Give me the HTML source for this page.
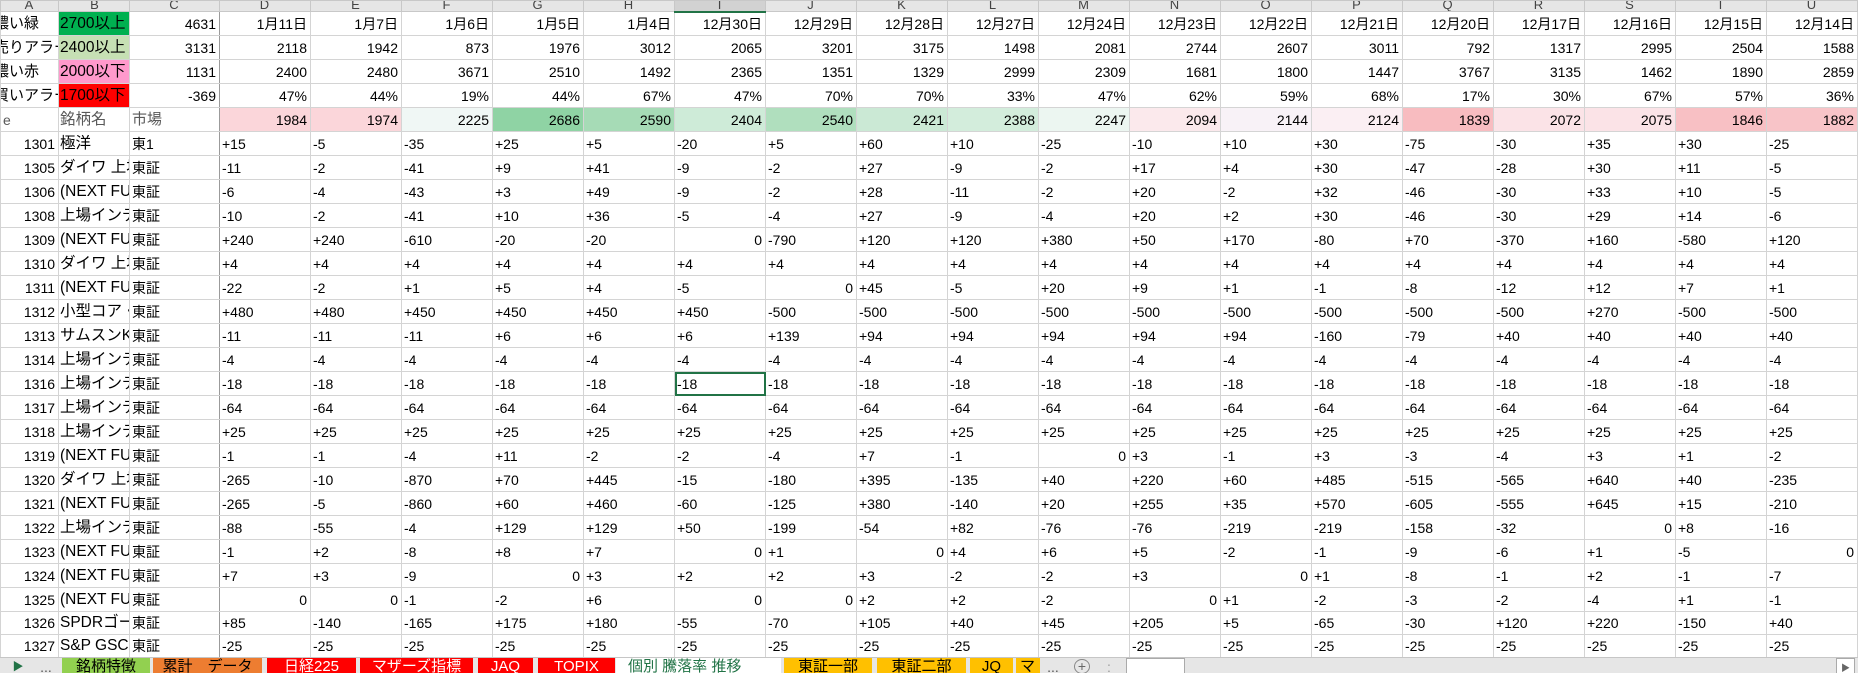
<!DOCTYPE html>
<html><head><meta charset="utf-8"><style>
*{margin:0;padding:0;box-sizing:border-box}
body{width:1858px;height:673px;overflow:hidden;background:#fff;font-family:"Liberation Sans","Noto Sans CJK JP",sans-serif;font-size:14px;color:#000;position:relative}
table{border-collapse:collapse;table-layout:fixed;position:absolute;left:0;top:0;width:1857px}
td{border:1px solid #d4d4d4;height:24px;padding:0 3px 0 2px;white-space:nowrap;overflow:hidden;vertical-align:middle;line-height:22px;max-width:0}
tr.s td{height:23px}
tr.h td{height:11px;background:#e6e6e6;border-color:#c8c8c8;text-align:center;color:#444;font-size:13px;line-height:0;vertical-align:bottom;padding-bottom:2px}
tr.h td span{position:relative;top:-4px}
td:nth-child(2){font-size:15.5px;padding-left:1px;padding-right:0}
td.r{text-align:right}
td.g{color:#595959}
td.fz{border-right:1px solid #9b9b9b}
.sel{outline:2px solid #217346;outline-offset:-2px}
.tabs{position:absolute;left:0;top:657px;width:1858px;height:16px;background:#e6e6e6;border-top:1px solid #c6c6c6;font-size:14px;overflow:hidden}
.tab{position:absolute;top:0;height:16px;line-height:18px;text-align:center;overflow:hidden;white-space:nowrap}
</style></head><body>
<table>
<colgroup><col style="width:58px"><col style="width:71px"><col style="width:90px">
<col style="width:91px"><col style="width:91px"><col style="width:91px"><col style="width:91px"><col style="width:91px"><col style="width:91px"><col style="width:91px"><col style="width:91px"><col style="width:91px"><col style="width:91px"><col style="width:91px"><col style="width:91px"><col style="width:91px"><col style="width:91px"><col style="width:91px"><col style="width:91px"><col style="width:91px"><col style="width:91px"></colgroup>
<tr class="h"><td><span>A</span></td><td style="font-size:13px"><span>B</span></td><td class="fz"><span>C</span></td><td><span>D</span></td><td><span>E</span></td><td><span>F</span></td><td><span>G</span></td><td><span>H</span></td><td style="background:#d2d2d2;border-bottom:2px solid #217346"><span>I</span></td><td><span>J</span></td><td><span>K</span></td><td><span>L</span></td><td><span>M</span></td><td><span>N</span></td><td><span>O</span></td><td><span>P</span></td><td><span>Q</span></td><td><span>R</span></td><td><span>S</span></td><td><span>T</span></td><td><span>U</span></td></tr>
<tr><td style="text-indent:-9px;font-size:15px">濃い緑</td><td style="background:#00b050">2700以上</td><td class="r fz">4631</td><td class="r">1月11日</td><td class="r">1月7日</td><td class="r">1月6日</td><td class="r">1月5日</td><td class="r">1月4日</td><td class="r">12月30日</td><td class="r">12月29日</td><td class="r">12月28日</td><td class="r">12月27日</td><td class="r">12月24日</td><td class="r">12月23日</td><td class="r">12月22日</td><td class="r">12月21日</td><td class="r">12月20日</td><td class="r">12月17日</td><td class="r">12月16日</td><td class="r">12月15日</td><td class="r">12月14日</td></tr>
<tr><td style="text-indent:-9px;font-size:15px">売りアラート</td><td style="background:#c6e0b4">2400以上</td><td class="r fz">3131</td><td class="r">2118</td><td class="r">1942</td><td class="r">873</td><td class="r">1976</td><td class="r">3012</td><td class="r">2065</td><td class="r">3201</td><td class="r">3175</td><td class="r">1498</td><td class="r">2081</td><td class="r">2744</td><td class="r">2607</td><td class="r">3011</td><td class="r">792</td><td class="r">1317</td><td class="r">2995</td><td class="r">2504</td><td class="r">1588</td></tr>
<tr><td style="text-indent:-9px;font-size:15px">濃い赤</td><td style="background:#ff99cc">2000以下</td><td class="r fz">1131</td><td class="r">2400</td><td class="r">2480</td><td class="r">3671</td><td class="r">2510</td><td class="r">1492</td><td class="r">2365</td><td class="r">1351</td><td class="r">1329</td><td class="r">2999</td><td class="r">2309</td><td class="r">1681</td><td class="r">1800</td><td class="r">1447</td><td class="r">3767</td><td class="r">3135</td><td class="r">1462</td><td class="r">1890</td><td class="r">2859</td></tr>
<tr><td style="text-indent:-9px;font-size:15px">買いアラート</td><td style="background:#ff0000">1700以下</td><td class="r fz">-369</td><td class="r">47%</td><td class="r">44%</td><td class="r">19%</td><td class="r">44%</td><td class="r">67%</td><td class="r">47%</td><td class="r">70%</td><td class="r">70%</td><td class="r">33%</td><td class="r">47%</td><td class="r">62%</td><td class="r">59%</td><td class="r">68%</td><td class="r">17%</td><td class="r">30%</td><td class="r">67%</td><td class="r">57%</td><td class="r">36%</td></tr>
<tr><td class="g">e</td><td class="g">銘柄名</td><td class="g fz" style="font-size:15px">市場</td><td class="r" style="background:#fbd6da">1984</td><td class="r" style="background:#fbd6da">1974</td><td class="r" style="background:#f0f7f5">2225</td><td class="r" style="background:#8fd3a4">2686</td><td class="r" style="background:#a6dbb6">2590</td><td class="r" style="background:#ceebd8">2404</td><td class="r" style="background:#b0dfbe">2540</td><td class="r" style="background:#cbe9d5">2421</td><td class="r" style="background:#d3eddc">2388</td><td class="r" style="background:#ecf6f1">2247</td><td class="r" style="background:#fbe9ec">2094</td><td class="r" style="background:#f8f2f7">2144</td><td class="r" style="background:#fbeff3">2124</td><td class="r" style="background:#f8bcc0">1839</td><td class="r" style="background:#fbe3e7">2072</td><td class="r" style="background:#fbe3e7">2075</td><td class="r" style="background:#f8c0c4">1846</td><td class="r" style="background:#f8c4c8">1882</td></tr>
<tr><td class="r">1301</td><td>極洋</td><td class="fz">東1</td><td>+15</td><td>-5</td><td>-35</td><td>+25</td><td>+5</td><td>-20</td><td>+5</td><td>+60</td><td>+10</td><td>-25</td><td>-10</td><td>+10</td><td>+30</td><td>-75</td><td>-30</td><td>+35</td><td>+30</td><td>-25</td></tr>
<tr><td class="r">1305</td><td>ダイワ 上場</td><td class="fz">東証</td><td>-11</td><td>-2</td><td>-41</td><td>+9</td><td>+41</td><td>-9</td><td>-2</td><td>+27</td><td>-9</td><td>-2</td><td>+17</td><td>+4</td><td>+30</td><td>-47</td><td>-28</td><td>+30</td><td>+11</td><td>-5</td></tr>
<tr><td class="r">1306</td><td>(NEXT FUNDS</td><td class="fz">東証</td><td>-6</td><td>-4</td><td>-43</td><td>+3</td><td>+49</td><td>-9</td><td>-2</td><td>+28</td><td>-11</td><td>-2</td><td>+20</td><td>-2</td><td>+32</td><td>-46</td><td>-30</td><td>+33</td><td>+10</td><td>-5</td></tr>
<tr><td class="r">1308</td><td>上場インデックス</td><td class="fz">東証</td><td>-10</td><td>-2</td><td>-41</td><td>+10</td><td>+36</td><td>-5</td><td>-4</td><td>+27</td><td>-9</td><td>-4</td><td>+20</td><td>+2</td><td>+30</td><td>-46</td><td>-30</td><td>+29</td><td>+14</td><td>-6</td></tr>
<tr><td class="r">1309</td><td>(NEXT FUNDS</td><td class="fz">東証</td><td>+240</td><td>+240</td><td>-610</td><td>-20</td><td>-20</td><td class="r">0</td><td>-790</td><td>+120</td><td>+120</td><td>+380</td><td>+50</td><td>+170</td><td>-80</td><td>+70</td><td>-370</td><td>+160</td><td>-580</td><td>+120</td></tr>
<tr><td class="r">1310</td><td>ダイワ 上場</td><td class="fz">東証</td><td>+4</td><td>+4</td><td>+4</td><td>+4</td><td>+4</td><td>+4</td><td>+4</td><td>+4</td><td>+4</td><td>+4</td><td>+4</td><td>+4</td><td>+4</td><td>+4</td><td>+4</td><td>+4</td><td>+4</td><td>+4</td></tr>
<tr><td class="r">1311</td><td>(NEXT FUNDS</td><td class="fz">東証</td><td>-22</td><td>-2</td><td>+1</td><td>+5</td><td>+4</td><td>-5</td><td class="r">0</td><td>+45</td><td>-5</td><td>+20</td><td>+9</td><td>+1</td><td>-1</td><td>-8</td><td>-12</td><td>+12</td><td>+7</td><td>+1</td></tr>
<tr><td class="r">1312</td><td>小型コア・</td><td class="fz">東証</td><td>+480</td><td>+480</td><td>+450</td><td>+450</td><td>+450</td><td>+450</td><td>-500</td><td>-500</td><td>-500</td><td>-500</td><td>-500</td><td>-500</td><td>-500</td><td>-500</td><td>-500</td><td>+270</td><td>-500</td><td>-500</td></tr>
<tr><td class="r">1313</td><td>サムスンKODEX</td><td class="fz">東証</td><td>-11</td><td>-11</td><td>-11</td><td>+6</td><td>+6</td><td>+6</td><td>+139</td><td>+94</td><td>+94</td><td>+94</td><td>+94</td><td>+94</td><td>-160</td><td>-79</td><td>+40</td><td>+40</td><td>+40</td><td>+40</td></tr>
<tr><td class="r">1314</td><td>上場インデックス</td><td class="fz">東証</td><td>-4</td><td>-4</td><td>-4</td><td>-4</td><td>-4</td><td>-4</td><td>-4</td><td>-4</td><td>-4</td><td>-4</td><td>-4</td><td>-4</td><td>-4</td><td>-4</td><td>-4</td><td>-4</td><td>-4</td><td>-4</td></tr>
<tr><td class="r">1316</td><td>上場インデックス</td><td class="fz">東証</td><td>-18</td><td>-18</td><td>-18</td><td>-18</td><td>-18</td><td class="sel">-18</td><td>-18</td><td>-18</td><td>-18</td><td>-18</td><td>-18</td><td>-18</td><td>-18</td><td>-18</td><td>-18</td><td>-18</td><td>-18</td><td>-18</td></tr>
<tr><td class="r">1317</td><td>上場インデックス</td><td class="fz">東証</td><td>-64</td><td>-64</td><td>-64</td><td>-64</td><td>-64</td><td>-64</td><td>-64</td><td>-64</td><td>-64</td><td>-64</td><td>-64</td><td>-64</td><td>-64</td><td>-64</td><td>-64</td><td>-64</td><td>-64</td><td>-64</td></tr>
<tr><td class="r">1318</td><td>上場インデックス</td><td class="fz">東証</td><td>+25</td><td>+25</td><td>+25</td><td>+25</td><td>+25</td><td>+25</td><td>+25</td><td>+25</td><td>+25</td><td>+25</td><td>+25</td><td>+25</td><td>+25</td><td>+25</td><td>+25</td><td>+25</td><td>+25</td><td>+25</td></tr>
<tr><td class="r">1319</td><td>(NEXT FUNDS</td><td class="fz">東証</td><td>-1</td><td>-1</td><td>-4</td><td>+11</td><td>-2</td><td>-2</td><td>-4</td><td>+7</td><td>-1</td><td class="r">0</td><td>+3</td><td>-1</td><td>+3</td><td>-3</td><td>-4</td><td>+3</td><td>+1</td><td>-2</td></tr>
<tr><td class="r">1320</td><td>ダイワ 上場</td><td class="fz">東証</td><td>-265</td><td>-10</td><td>-870</td><td>+70</td><td>+445</td><td>-15</td><td>-180</td><td>+395</td><td>-135</td><td>+40</td><td>+220</td><td>+60</td><td>+485</td><td>-515</td><td>-565</td><td>+640</td><td>+40</td><td>-235</td></tr>
<tr><td class="r">1321</td><td>(NEXT FUNDS</td><td class="fz">東証</td><td>-265</td><td>-5</td><td>-860</td><td>+60</td><td>+460</td><td>-60</td><td>-125</td><td>+380</td><td>-140</td><td>+20</td><td>+255</td><td>+35</td><td>+570</td><td>-605</td><td>-555</td><td>+645</td><td>+15</td><td>-210</td></tr>
<tr><td class="r">1322</td><td>上場インデックス</td><td class="fz">東証</td><td>-88</td><td>-55</td><td>-4</td><td>+129</td><td>+129</td><td>+50</td><td>-199</td><td>-54</td><td>+82</td><td>-76</td><td>-76</td><td>-219</td><td>-219</td><td>-158</td><td>-32</td><td class="r">0</td><td>+8</td><td>-16</td></tr>
<tr><td class="r">1323</td><td>(NEXT FUNDS</td><td class="fz">東証</td><td>-1</td><td>+2</td><td>-8</td><td>+8</td><td>+7</td><td class="r">0</td><td>+1</td><td class="r">0</td><td>+4</td><td>+6</td><td>+5</td><td>-2</td><td>-1</td><td>-9</td><td>-6</td><td>+1</td><td>-5</td><td class="r">0</td></tr>
<tr><td class="r">1324</td><td>(NEXT FUNDS</td><td class="fz">東証</td><td>+7</td><td>+3</td><td>-9</td><td class="r">0</td><td>+3</td><td>+2</td><td>+2</td><td>+3</td><td>-2</td><td>-2</td><td>+3</td><td class="r">0</td><td>+1</td><td>-8</td><td>-1</td><td>+2</td><td>-1</td><td>-7</td></tr>
<tr><td class="r">1325</td><td>(NEXT FUNDS</td><td class="fz">東証</td><td class="r">0</td><td class="r">0</td><td>-1</td><td>-2</td><td>+6</td><td class="r">0</td><td class="r">0</td><td>+2</td><td>+2</td><td>-2</td><td class="r">0</td><td>+1</td><td>-2</td><td>-3</td><td>-2</td><td>-4</td><td>+1</td><td>-1</td></tr>
<tr class="s"><td class="r">1326</td><td>SPDRゴールド</td><td class="fz">東証</td><td>+85</td><td>-140</td><td>-165</td><td>+175</td><td>+180</td><td>-55</td><td>-70</td><td>+105</td><td>+40</td><td>+45</td><td>+205</td><td>+5</td><td>-65</td><td>-30</td><td>+120</td><td>+220</td><td>-150</td><td>+40</td></tr>
<tr class="s"><td class="r">1327</td><td>S&amp;P GSCI</td><td class="fz">東証</td><td>-25</td><td>-25</td><td>-25</td><td>-25</td><td>-25</td><td>-25</td><td>-25</td><td>-25</td><td>-25</td><td>-25</td><td>-25</td><td>-25</td><td>-25</td><td>-25</td><td>-25</td><td>-25</td><td>-25</td><td>-25</td></tr>
</table>
<div class="tabs">
<div class="tab" style="left:12px;width:12px;color:#217346;font-size:11px">&#9654;</div>
<div class="tab" style="left:36px;width:20px;color:#555">...</div>
<div class="tab" style="left:62px;width:88px;background:#92d050;font-size:15px">銘柄特徴</div>
<div class="tab" style="left:153px;width:109px;background:#ed7d31;font-size:15px">累計　データ</div>
<div class="tab" style="left:267px;width:89px;background:#ff0000;color:#fff;font-size:15px">日経225</div>
<div class="tab" style="left:360px;width:113px;background:#ff0000;color:#fff;font-size:15px">マザーズ指標</div>
<div class="tab" style="left:478px;width:55px;background:#ff0000;color:#fff;font-size:15px">JAQ</div>
<div class="tab" style="left:538px;width:77px;background:#ff0000;color:#fff;font-size:15px">TOPIX</div>
<div class="tab" style="left:616px;width:165px;background:#fff;color:#217346;text-align:left;padding-left:12px;font-size:15px">個別 騰落率 推移</div>
<div class="tab" style="left:784px;width:88px;background:#ffc000;font-size:15px">東証一部</div>
<div class="tab" style="left:877px;width:89px;background:#ffc000;font-size:15px">東証二部</div>
<div class="tab" style="left:970px;width:43px;background:#ffc000;font-size:15px">JQ</div>
<div class="tab" style="left:1016px;width:24px;background:#ffc000;text-align:left;padding-left:4px;font-size:15px">マ</div>
<div class="tab" style="left:1044px;width:18px;color:#555">...</div>
<div class="tab" style="left:1074px;width:16px;height:15px;top:1px;border:1px solid #888;border-radius:50%;line-height:13px;color:#666">+</div>
<div class="tab" style="left:1106px;width:6px;color:#999">:</div>
<div class="tab" style="left:1126px;width:59px;height:16px;background:#fff;border:1px solid #aaa"></div>
<div class="tab" style="left:1836px;width:19px;height:16px;background:#fff;border:1px solid #aaa;color:#666;font-size:9px">&#9654;</div>
</div>
</body></html>
